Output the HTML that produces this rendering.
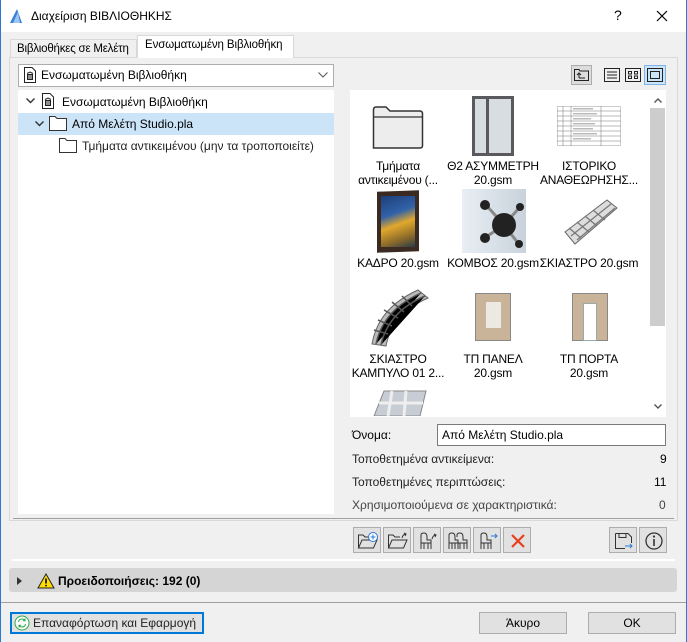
<!DOCTYPE html>
<html><head><meta charset="utf-8"><style>
*{margin:0;padding:0;box-sizing:border-box}
body{width:687px;height:642px;background:#f0f0f0;font-family:"Liberation Sans","DejaVu Sans",sans-serif;font-size:12px;color:#000;position:relative;overflow:hidden}
.a{position:absolute}
.t{position:absolute;white-space:nowrap}
.btn{position:absolute;background:#e1e1e1;border:1px solid #adadad}
.ib{position:absolute;width:28px;height:26px;background:#e1e1e1;border:1px solid #adadad}
.ib svg{position:absolute;left:3px;top:3px}
.cap{position:absolute;width:100px;text-align:center;font-size:12px;line-height:14px;color:#000;white-space:nowrap;letter-spacing:-0.2px}
</style></head><body>
<div class="a" style="left:0;top:0;width:687px;height:32px;background:#fff"></div>
<div class="a" style="left:0;top:0;width:1px;height:642px;background:#2b79d6"></div>
<div class="a" style="right:0;top:0;width:1px;height:642px;background:#2b79d6"></div>
<svg class="a" style="left:9px;top:8px" width="14" height="16"><path d="M1 15 L8 1 L13 15 Z" fill="#3a7fd8"/><path d="M4 15 L9 4 L11 15Z" fill="#9cc6f4"/></svg>
<div class="t" style="left:31px;top:9px;font-size:12px">Διαχείριση ΒΙΒΛΙΟΘΗΚΗΣ</div>
<div class="t" style="left:614px;top:7px;font-size:14px">?</div>
<svg class="a" style="left:656px;top:10px" width="12" height="12"><path d="M1 1L11 11M11 1L1 11" stroke="#000" stroke-width="1.2"/></svg>

<!-- tabs -->
<div class="a" style="left:10px;top:39px;width:127px;height:19px;border:1px solid #d9d9d9;border-bottom:none;background:#f0f0f0"></div>
<div class="t" style="left:17px;top:43px;font-size:11.5px;letter-spacing:-0.2px">Βιβλιοθήκες σε Μελέτη</div>
<div class="a" style="left:137px;top:35px;width:157px;height:23px;border:1px solid #d9d9d9;border-bottom:none;background:#fff"></div>
<div class="t" style="left:145px;top:39px;font-size:11.5px;letter-spacing:-0.1px">Ενσωματωμένη Βιβλιοθήκη</div>
<div class="a" style="left:9px;top:57px;width:669px;height:464px;border:1px solid #d9d9d9;background:#f0f0f0"></div>
<div class="a" style="left:138px;top:57px;width:155px;height:1px;background:#fff"></div>

<!-- dropdown -->
<div class="a" style="left:18px;top:64px;width:316px;height:23px;border:1px solid #adadad;background:#fff"></div>
<svg class="a" style="left:24px;top:67px" width="12" height="16"><path d="M0.5 0.5H8L11.5 4V15.5H0.5Z" fill="#fff" stroke="#222"/><path d="M3 6.5L6 5 9 6.5M3 7.5H9M3.5 8v4M5 8v4M7 8v4M8.5 8v4M3 12.5H9" stroke="#222" stroke-width="1" fill="none"/></svg>
<div class="t" style="left:41px;top:68px">Ενσωματωμένη Βιβλιοθήκη</div>
<svg class="a" style="left:318px;top:72px" width="10" height="6"><path d="M0.5 0.5L5 5 9.5 0.5" stroke="#555" fill="none"/></svg>

<!-- tree -->
<div class="a" style="left:18px;top:90px;width:316px;height:424px;background:#fff"></div>
<svg class="a" style="left:26px;top:98px" width="9" height="6"><path d="M0.5 0.5L4.5 4.5 8.5 0.5" stroke="#333" stroke-width="1.4" fill="none"/></svg>
<svg class="a" style="left:42px;top:93px" width="12" height="16"><path d="M0.5 0.5H8L11.5 4V15.5H0.5Z" fill="#fff" stroke="#222"/><path d="M3 6.5L6 5 9 6.5M3 7.5H9M3.5 8v4M5 8v4M7 8v4M8.5 8v4M3 12.5H9" stroke="#222" fill="none"/></svg>
<div class="t" style="left:62px;top:95px">Ενσωματωμένη Βιβλιοθήκη</div>
<div class="a" style="left:18px;top:113px;width:316px;height:22px;background:#cce4f7"></div>
<svg class="a" style="left:35px;top:121px" width="9" height="6"><path d="M0.5 0.5L4.5 4.5 8.5 0.5" stroke="#333" stroke-width="1.4" fill="none"/></svg>
<svg class="a" style="left:49px;top:116px" width="18" height="15"><path d="M0.5 14.5V0.5H6L8 2.5H17.5V14.5Z" fill="#fff" stroke="#333"/></svg>
<div class="t" style="left:72px;top:117px">Από Μελέτη Studio.pla</div>
<svg class="a" style="left:59px;top:138px" width="18" height="15"><path d="M0.5 14.5V0.5H6L8 2.5H17.5V14.5Z" fill="#fff" stroke="#333"/></svg>
<div class="t" style="left:82px;top:139px;color:#222">Τμήματα αντικειμένου (μην τα τροποποιείτε)</div>

<!-- view icons -->
<div class="a" style="left:571px;top:65px;width:21px;height:20px;background:#dcdcdc;border:1px solid #adadad"></div>
<svg class="a" style="left:574px;top:68px" width="16" height="14"><path d="M0.5 1.5H5L6 3H14.5V12.5H0.5Z" fill="none" stroke="#222"/><path d="M5 10V5M3 7L5 5 7 7M5 10H11" stroke="#222" fill="none"/></svg>
<svg class="a" style="left:604px;top:68px" width="16" height="14"><rect x="0.5" y="0.5" width="15" height="13" fill="none" stroke="#222"/><path d="M3 4H13M3 7H13M3 10H13" stroke="#222"/></svg>
<svg class="a" style="left:625px;top:68px" width="16" height="14"><rect x="0.5" y="0.5" width="15" height="13" fill="none" stroke="#222"/><rect x="3.5" y="3.5" width="3" height="2.5" fill="none" stroke="#222"/><rect x="9.5" y="3.5" width="3" height="2.5" fill="none" stroke="#222"/><rect x="3.5" y="8" width="3" height="2.5" fill="none" stroke="#222"/><rect x="9.5" y="8" width="3" height="2.5" fill="none" stroke="#222"/></svg>
<div class="a" style="left:644px;top:65px;width:22px;height:20px;background:#cce4f7;border:1px solid #7eb4ea"></div>
<svg class="a" style="left:647px;top:68px" width="16" height="14"><rect x="0.5" y="0.5" width="15" height="13" fill="none" stroke="#222"/><rect x="3.5" y="3.5" width="9" height="7" fill="none" stroke="#222"/></svg>

<!-- thumbs -->
<div class="a" style="left:350px;top:90px;width:316px;height:327px;background:#fff"></div>
<div class="a" style="left:650px;top:108px;width:15px;height:218px;background:#cdcdcd"></div>
<svg class="a" style="left:654px;top:98px" width="8" height="5"><path d="M0.5 4.5L4 1 7.5 4.5" stroke="#555" stroke-width="1.4" fill="none"/></svg>
<svg class="a" style="left:654px;top:404px" width="8" height="5"><path d="M0.5 0.5L4 4 7.5 0.5" stroke="#555" stroke-width="1.4" fill="none"/></svg>

<svg class="a" style="left:372px;top:104px" width="52" height="46"><path d="M1.5 44V6Q1.5 3 4 3H14L18 7H48Q50.5 7 50.5 10V41.5Q50.5 44 48 44Z" fill="#ededed" stroke="#333" stroke-width="1.5"/><path d="M1.5 13H50.5" stroke="#333" stroke-width="1.2"/></svg>
<div class="cap" style="left:348px;top:159px">Τμήματα<br>αντικειμένου (...</div>

<div class="a" style="left:472px;top:96px;width:42px;height:60px;background:#5a5a5e"></div>
<div class="a" style="left:475px;top:99px;width:11px;height:54px;background:#d8dde2"></div>
<div class="a" style="left:489px;top:99px;width:22px;height:54px;background:#d8dde2"></div>
<div class="cap" style="left:443px;top:159px">Θ2 ΑΣΥΜΜΕΤΡΗ<br>20.gsm</div>

<svg class="a" style="left:557px;top:106px" width="64" height="40"><rect x="0.5" y="0.5" width="63" height="39" fill="#fff" stroke="#999" stroke-width=".5"/><g stroke="#777" stroke-width=".5"><path d="M0 5H64M0 10H64M0 15H64M0 20H64M0 25H64M0 30H64M0 35H64M6 0V40M14 0V40M44 0V40"/></g><g fill="#bbb"><rect x="16" y="2" width="20" height="1.5"/><rect x="16" y="7" width="24" height="1.5"/><rect x="16" y="12" width="18" height="1.5"/><rect x="16" y="17" width="22" height="1.5"/><rect x="16" y="22" width="20" height="1.5"/><rect x="16" y="27" width="24" height="1.5"/><rect x="16" y="32" width="18" height="1.5"/></g></svg>
<div class="cap" style="left:539px;top:159px">ΙΣΤΟΡΙΚΟ<br>ΑΝΑΘΕΩΡΗΣΗΣ...</div>

<div class="a" style="left:377px;top:191px;width:42px;height:61px;background:#3a2a22;transform:skewY(-2deg)"></div>
<div class="a" style="left:381px;top:196px;width:34px;height:51px;background:linear-gradient(160deg,#1d3e7a 0,#3162a8 35%,#e1a82c 55%,#8a6a2a 80%,#2a3a4a 100%)"></div>
<div class="cap" style="left:348px;top:256px">ΚΑΔΡΟ 20.gsm</div>

<div class="a" style="left:462px;top:189px;width:64px;height:64px;background:linear-gradient(90deg,#e8eef4,#c9d2dc)"></div>
<svg class="a" style="left:462px;top:189px" width="64" height="64"><path d="M24 16L42 36M58 18L42 36M24 48L42 36M56 54L42 36" stroke="#888" stroke-width="3"/><circle cx="42" cy="36" r="12" fill="#222"/><circle cx="23" cy="16" r="5" fill="#222"/><circle cx="58" cy="18" r="4" fill="#222"/><circle cx="23" cy="49" r="5" fill="#222"/><circle cx="57" cy="55" r="4" fill="#222"/></svg>
<div class="cap" style="left:443px;top:256px">ΚΟΜΒΟΣ 20.gsm</div>

<svg class="a" style="left:563px;top:198px" width="56" height="48"><path d="M2 34L44 2 54 10 12 46Z" fill="#ddd" stroke="#666"/><path d="M8 38L48 6M14 42L52 10M6 30L18 40M14 24L26 34M22 18L34 28M30 12L42 22" stroke="#777" stroke-width="1.2"/></svg>
<div class="cap" style="left:539px;top:256px">ΣΚΙΑΣΤΡΟ 20.gsm</div>

<svg class="a" style="left:366px;top:286px" width="66" height="62"><path d="M6 58Q12 22 52 4L62 12Q26 28 20 60Z" fill="#bbb" stroke="#666"/><path d="M10 58Q17 24 55 7M15 59Q22 26 59 10M8 44L22 48M12 34L26 40M18 24L32 32M26 16L38 26M36 10L46 20" stroke="#555" stroke-width="1.5"/></svg>
<div class="cap" style="left:348px;top:352px">ΣΚΙΑΣΤΡΟ<br>ΚΑΜΠΥΛΟ 01 2...</div>

<div class="a" style="left:475px;top:293px;width:36px;height:48px;background:#c9b49a;border:1px solid #888"></div>
<div class="a" style="left:486px;top:302px;width:15px;height:26px;background:#ece8e2"></div>
<div class="cap" style="left:443px;top:352px">ΤΠ ΠΑΝΕΛ<br>20.gsm</div>

<div class="a" style="left:572px;top:293px;width:36px;height:48px;background:#c9b49a;border:1px solid #888"></div>
<div class="a" style="left:583px;top:303px;width:14px;height:38px;background:#fff;border:1px solid #9aa"></div>
<div class="cap" style="left:539px;top:352px">ΤΠ ΠΟΡΤΑ<br>20.gsm</div>

<svg class="a" style="left:370px;top:389px" width="58" height="27"><path d="M4 27L14 2H56L50 27Z" fill="#c8ccd4" stroke="#888"/><path d="M9 14H53M22 2L18 27M36 2L34 27" stroke="#eee" stroke-width="3"/></svg>

<!-- info -->
<div class="t" style="left:352px;top:428px">Όνομα:</div>
<div class="a" style="left:437px;top:424px;width:229px;height:22px;border:1px solid #7a7a7a;background:#fff"></div>
<div class="t" style="left:442px;top:428px">Από Μελέτη Studio.pla</div>
<div class="t" style="left:352px;top:452px;color:#222">Τοποθετημένα αντικείμενα:</div>
<div class="t" style="left:660px;top:452px">9</div>
<div class="t" style="left:352px;top:475px;color:#222">Τοποθετημένες περιπτώσεις:</div>
<div class="t" style="left:654px;top:475px">11</div>
<div class="t" style="left:352px;top:498px;color:#444">Χρησιμοποιούμενα σε χαρακτηριστικά:</div>
<div class="t" style="left:659px;top:498px;color:#444">0</div>

<div class="a" style="left:13px;top:518px;width:661px;height:1px;background:#a0a0a0"></div>
<div class="a" style="left:12px;top:559px;width:663px;height:2px;background:#fff"></div>

<!-- toolbar -->
<div class="ib" style="left:353px;top:527px"><svg width="22" height="20"><path d="M1.5 17V4H6L8 6H12M1.5 17L5 9H20L16.5 17Z" fill="none" stroke="#333"/><circle cx="16" cy="6" r="4.5" fill="#fff" stroke="#2b79d6"/><path d="M16 3.5v5M13.5 6h5" stroke="#2b79d6"/></svg></div>
<div class="ib" style="left:383px;top:527px"><svg width="22" height="20"><path d="M1.5 17V4H6L8 6H13M1.5 17L5 9H20L16.5 17Z" fill="none" stroke="#333"/><path d="M15 7Q16 3 19 3M17 2L19 3 18 5" stroke="#333" fill="none"/></svg></div>
<div class="ib" style="left:413px;top:527px"><svg width="22" height="20"><path d="M4 18V4Q4 2 7 2Q10 2 10 6V9H14V18M4 12H14M7 12V18M11 12V18" stroke="#333" fill="none"/><path d="M15 8Q16 4 19 4M17 3L19 4 18 6" stroke="#333" fill="none"/></svg></div>
<div class="ib" style="left:443px;top:527px"><svg width="22" height="20"><path d="M2 18V4Q2 2 5 2Q8 2 8 6V9H11V18M2 12H11M5 12V18M8 12V18" stroke="#333" fill="none"/><path d="M10 6V4Q10 2 13 2Q16 2 16 6V9H20V18M10 12H20M13 12V18M17 12V18" stroke="#333" fill="none"/></svg></div>
<div class="ib" style="left:473px;top:527px"><svg width="22" height="20"><path d="M4 18V4Q4 2 7 2Q10 2 10 6V9H14V18M4 12H14M7 12V18M11 12V18" stroke="#333" fill="none"/><path d="M14 5H20M18 3L20 5 18 7" stroke="#2b79d6" fill="none"/></svg></div>
<div class="ib" style="left:503px;top:527px"><svg width="22" height="20"><path d="M5 4L17 16M17 4L5 16" stroke="#e8401c" stroke-width="2.2"/></svg></div>
<div class="ib" style="left:609px;top:527px"><svg width="22" height="20"><path d="M2.5 2.5H15L18.5 6V12M2.5 2.5V17.5H12" stroke="#333" fill="none"/><rect x="6" y="2.5" width="7" height="4" fill="none" stroke="#333"/><path d="M12 15H19M17 13L19 15 17 17" stroke="#2b79d6" fill="none"/></svg></div>
<div class="ib" style="left:639px;top:527px"><svg width="22" height="20"><circle cx="11" cy="10" r="8" fill="none" stroke="#333" stroke-width="1.3"/><path d="M11 8V15" stroke="#333" stroke-width="1.6"/><circle cx="11" cy="5.5" r="1.1" fill="#333"/></svg></div>

<!-- warnings -->
<div class="a" style="left:9px;top:568px;width:668px;height:24px;background:#d5d5d5;border-radius:3px"></div>
<svg class="a" style="left:17px;top:577px" width="5" height="8"><path d="M0 0L5 4 0 8Z" fill="#333"/></svg>
<svg class="a" style="left:37px;top:573px" width="18" height="16"><path d="M9 1L17 15H1Z" fill="#ffdd00" stroke="#222"/><path d="M9 5.5V10.5" stroke="#000" stroke-width="1.6"/><circle cx="9" cy="12.6" r="0.9" fill="#000"/></svg>
<div class="t" style="left:58px;top:574px;font-weight:bold">Προειδοποιήσεις: 192 (0)</div>
<div class="a" style="left:1px;top:602px;width:685px;height:1px;background:#a0a0a0"></div>

<!-- bottom buttons -->
<div class="btn" style="left:10px;top:612px;width:194px;height:22px;border:2px solid #0078d7"></div>
<svg class="a" style="left:14px;top:615px" width="16" height="16"><circle cx="8" cy="8" r="7" fill="#fff" stroke="#2aa84a"/><path d="M4.5 7Q5 4 8 4Q10 4 11 5.5M11.5 9Q11 12 8 12Q6 12 5 10.5M11 3.5V5.8H8.8M5 12.5V10.2H7.2" stroke="#2aa84a" fill="none"/></svg>
<div class="t" style="left:33px;top:616px;color:#222">Επαναφόρτωση και Εφαρμογή</div>
<div class="btn" style="left:479px;top:612px;width:88px;height:22px"></div>
<div class="t" style="left:479px;top:616px;width:88px;text-align:center">Άκυρο</div>
<div class="btn" style="left:588px;top:612px;width:88px;height:22px"></div>
<div class="t" style="left:588px;top:616px;width:88px;text-align:center">OK</div>
</body></html>
